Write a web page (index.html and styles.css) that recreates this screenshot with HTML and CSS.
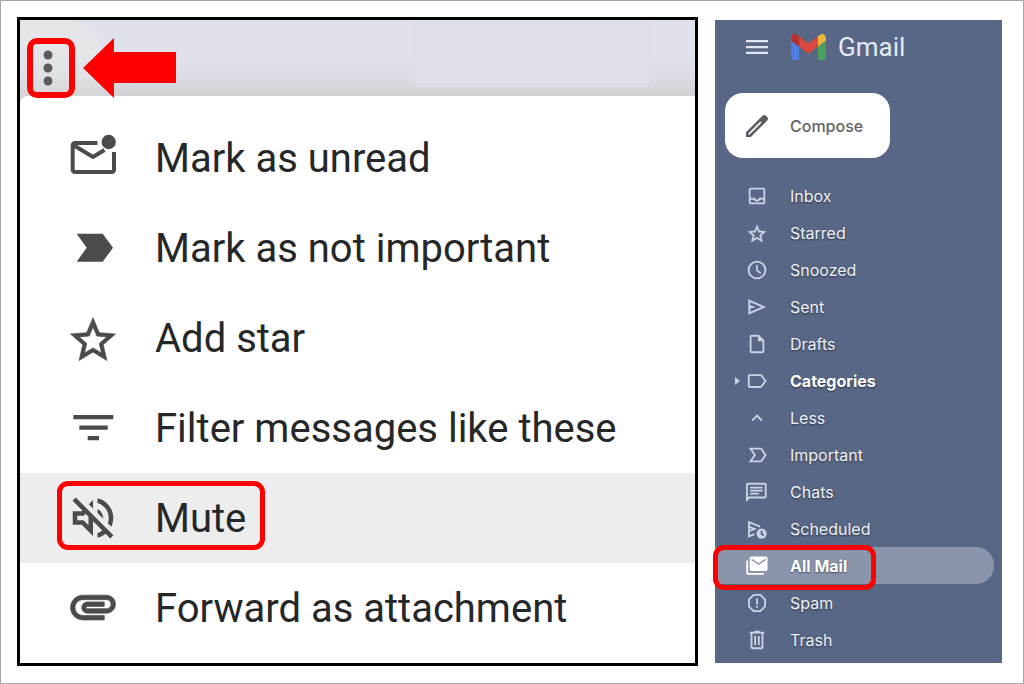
FILE: index.html
```html
<!DOCTYPE html>
<html lang="en">
<head>
    <meta charset="UTF-8">
    <meta name="viewport" content="width=device-width, initial-scale=1.0">
    <title>Mute messages in Gmail</title>
    <link rel="stylesheet" href="styles.css">
</head>
<body>
    <div class="page">

        <!-- More menu -->
        <section class="menu-panel">
            <div class="menu-header">
                <button class="more-button" aria-label="More">
                    <svg width="10" height="36" viewBox="0 0 10 36">
                        <circle cx="5" cy="5" r="4.5"/>
                        <circle cx="5" cy="18" r="4.5"/>
                        <circle cx="5" cy="31" r="4.5"/>
                    </svg>
                </button>
                <svg class="arrow" width="93" height="60" viewBox="0 0 93 60">
                    <path d="M0 30L31 0v14h62v31H31v15z"/>
                </svg>
                <div class="header-patch"></div>
            </div>
            <ul class="menu">
                <li>
                    <button class="menu-item">
                        <svg viewBox="0 0 54 54">
                            <path class="line" d="M31.5 12H9a2.3 2.3 0 0 0-2.3 2.3V38.7a2.3 2.3 0 0 0 2.3 2.3H45.7a2.3 2.3 0 0 0 2.3-2.3V21"/>
                            <path class="line" d="M8 14.500l19 11.500 11.500-7"/>
                            <circle cx="42.7" cy="11" r="7.2"/>
                        </svg>
                        Mark as unread
                    </button>
                </li>
                <li>
                    <button class="menu-item">
                        <svg viewBox="0 0 54 54"><path d="M10.7 12.7h26L47 26.7l-10.300 14h-26l10-14z"/></svg>
                        Mark as not important
                    </button>
                </li>
                <li>
                    <button class="menu-item">
                        <svg class="heavy" viewBox="0 -1 24 24"><path d="M22 9.240l-7.190-.62L12 2 9.190 8.630 2 9.240l5.460 4.730L5.820 21 12 17.270 18.180 21l-1.630-7.030L22 9.240zM12 15.400l-3.760 2.270 1-4.280-3.320-2.880 4.380-.38L12 6.100l1.710 4.040 4.380.38-3.320 2.880 1 4.280L12 15.400z"/></svg>
                        Add star
                    </button>
                </li>
                <li>
                    <button class="menu-item">
                        <svg viewBox="0 0 54 54"><path d="M7.3 14h40v4.3h-40zM13.3 24.5h28.4v4.3H13.3zM21.7 35H33v4.3H21.7z"/></svg>
                        Filter messages like these
                    </button>
                </li>
                <li>
                    <button class="menu-item selected">
                        <svg viewBox="0 0 24 24"><path d="M4.340 2.930L2.930 4.340 7.290 8.700 7 9H3v6h4l5 5v-6.590l4.180 4.180c-.65.49-1.380.88-2.180 1.110v2.060c1.340-.3 2.570-.92 3.610-1.750l2.050 2.050 1.410-1.410L4.340 2.930zM10 15.170L7.830 13H5v-2h2.830l.88-.88L10 11.410v3.760zM19 12c0 .82-.15 1.610-.41 2.340l1.530 1.530c.56-1.170.88-2.480.88-3.870 0-4.280-2.990-7.860-7-8.770v2.060c2.890.86 5 3.540 5 6.710zm-7-8l-1.880 1.880L12 7.760zm4.500 8c0-1.770-1.020-3.290-2.500-4.030v1.790l2.480 2.480c.01-.08.02-.16.02-.24z"/></svg>
                        Mute
                        <span class="callout"></span>
                    </button>
                </li>
                <li>
                    <button class="menu-item">
                        <svg class="heavy" viewBox="0 0.7 24 24"><path d="M2 12.500C2 9.460 4.460 7 7.500 7H18c2.210 0 4 1.790 4 4s-1.790 4-4 4H9.500C8.120 15 7 13.880 7 12.500S8.120 10 9.500 10H17v2H9.410c-.55 0-.55 1 0 1H18c1.100 0 2-.9 2-2s-.9-2-2-2H7.500C5.570 9 4 10.570 4 12.500S5.570 16 7.500 16H17v2H7.500C4.460 18 2 15.540 2 12.500z"/></svg>
                        Forward as attachment
                    </button>
                </li>
            </ul>
        </section>

        <!-- Gmail sidebar -->
        <aside class="sidebar">
            <div class="brand">
                <button class="burger" aria-label="Main menu">
                    <svg width="22" height="16" viewBox="0 0 22 16"><path d="M0 1h22v2.300H0zM0 6.900h22v2.300H0zM0 12.800h22v2.300H0z"/></svg>
                </button>
                <svg class="logo" width="35" height="26" viewBox="52 42 88 66">
                    <path fill="#4f7fe3" d="M58 108h14V74L52 59v43c0 3.320 2.690 6 6 6"/>
                    <path fill="#4b9f5f" d="M120 108h14c3.320 0 6-2.690 6-6V59l-20 15"/>
                    <path fill="#eab63c" d="M120 48v26l20-15v-8c0-7.420-8.470-11.650-14.400-7.200"/>
                    <path fill="#d9493f" d="M72 74V48l24 18 24-18v26L96 92"/>
                    <path fill="#b3302f" d="M52 51v8l20 15V48l-5.600-4.200c-5.940-4.450-14.400-.22-14.400 7.200"/>
                </svg>
                <span class="brand-name">Gmail</span>
            </div>

            <button class="compose">
                <svg viewBox="0 0 22 22">
                    <path fill-rule="evenodd" d="M0 17.200L14.400 2.800 19.200 7.600 4.800 22H0zM2.400 18.400v1.200h1.200L15.600 7.600l-1.200-1.200z"/>
                    <path d="M13.500 3.700L16.600.8a2.400 2.400 0 0 1 3.400 0l1.200 1.200a2.400 2.400 0 0 1 0 3.400L18.300 8.500z"/>
                </svg>
                Compose
            </button>

            <nav class="nav">
                <a class="nav-item" href="#">
                    <svg viewBox="0 0 24 24"><path d="M19 3H5c-1.100 0-2 .9-2 2v14c0 1.100.9 2 2 2h14c1.100 0 2-.9 2-2V5c0-1.100-.9-2-2-2zm0 16H5v-3h3.560c.69 1.190 1.970 2 3.450 2s2.750-.81 3.450-2H19v3zm0-5h-4.990c0 1.100-.9 2-2 2s-2-.9-2-2H5V5h14v9z"/></svg>
                    Inbox
                </a>
                <a class="nav-item" href="#">
                    <svg class="heavy" viewBox="0 -1 24 24"><path d="M22 9.240l-7.190-.62L12 2 9.190 8.630 2 9.240l5.460 4.730L5.820 21 12 17.270 18.180 21l-1.630-7.030L22 9.240zM12 15.400l-3.760 2.270 1-4.280-3.320-2.880 4.380-.38L12 6.100l1.710 4.040 4.380.38-3.320 2.880 1 4.280L12 15.400z"/></svg>
                    Starred
                </a>
                <a class="nav-item" href="#">
                    <svg viewBox="0 0 24 24"><path d="M12 1.800a10.200 10.200 0 1 0 0 20.400 10.200 10.200 0 0 0 0-20.400zm0 18.300a8.100 8.100 0 1 1 0-16.200 8.100 8.100 0 0 1 0 16.200zM12.800 6.500H11v6l4.500 4 1.200-1.400-3.900-3.400z"/></svg>
                    Snoozed
                </a>
                <a class="nav-item" href="#">
                    <svg viewBox="0 0 24 24"><path fill-rule="evenodd" d="M2.500 3.500L22 12 2.500 20.500zM4.600 6.700v3.400l6 1.900-6 1.900v3.400L17 12z"/></svg>
                    Sent
                </a>
                <a class="nav-item" href="#">
                    <svg viewBox="0 0 24 24"><path fill-rule="evenodd" d="M14 2H6c-1.100 0-2 .9-2 2v16c0 1.100.9 2 2 2h12c1.100 0 2-.9 2-2V8zM6 20V4h7v5h5v11z"/></svg>
                    Drafts
                </a>
                <a class="nav-item parent bold" href="#">
                    <svg class="caret" viewBox="0 0 5 8"><path d="M0 0l5 4-5 4z"/></svg>
                    <svg viewBox="0 0 24 24"><path fill-rule="evenodd" d="M16 4.500H4c-1.100 0-2 .9-2 2v11c0 1.100.9 2 2 2h12c.67 0 1.270-.33 1.630-.84L22.500 12l-4.870-6.660A2 2 0 0 0 16 4.500zm0 13H4v-11h12l4 5.500z"/></svg>
                    Categories
                </a>
                <a class="nav-item" href="#">
                    <svg viewBox="0 0 24 24"><path d="M12 8l-6 6 1.410 1.410L12 10.830l4.590 4.580L18 14z"/></svg>
                    Less
                </a>
                <a class="nav-item" href="#">
                    <svg viewBox="0 0 24 24"><path fill-rule="evenodd" d="M3 4h13c.7 0 1.300.3 1.700.9L22.500 12l-4.800 7.100c-.4.6-1 .9-1.700.9H3l5.500-8zm3.800 2l4.200 6-4.200 6h9.200l4-6-4-6z"/></svg>
                    Important
                </a>
                <a class="nav-item" href="#">
                    <svg viewBox="0 0 24 24"><path fill-rule="evenodd" d="M2 2h18.500c1.100 0 2 .9 2 2v13c0 1.100-.9 2-2 2H4l-4 4V4c0-1.100.9-2 2-2zm0 2v14l1.200-1h17.300V4zM4.500 6.200H18v1.900H4.500zM4.500 9.500H18v1.900H4.500zM4.500 12.800H14v1.900H4.500z"/></svg>
                    Chats
                </a>
                <a class="nav-item" href="#">
                    <svg viewBox="0 0 24 24">
                        <path class="thin" d="M15.500 9.500L3.200 4.500v15.500l6-2.500M3.200 9.500l6 2.500-6 2.200"/>
                        <circle cx="17" cy="17" r="5.600"/>
                        <path class="hand" d="M17 13.800v3.400l2.200 1.800"/>
                    </svg>
                    Scheduled
                </a>
                <a class="nav-item bold current" href="#">
                    <svg viewBox="0 0 24 24">
                        <path fill-rule="evenodd" d="M6 1.500h15.500c1.100 0 2 .9 2 2v12c0 1.100-.9 2-2 2H6c-1.100 0-2-.9-2-2v-12c0-1.100.9-2 2-2zm0 2.200v1.900l7.800 5.200 7.700-5.200V3.700l-7.700 5.200z"/>
                        <path d="M.3 6h2v13.500h17.200v2H2.300c-1.100 0-2-.9-2-2z"/>
                    </svg>
                    All Mail
                    <span class="callout"></span>
                </a>
                <a class="nav-item" href="#">
                    <svg viewBox="0 0 24 24">
                        <path class="thin" d="M8.300 3.200h7.400l5.100 5.100v7.400l-5.100 5.100H8.300l-5.100-5.100V8.300z"/>
                        <path d="M11 6.800h2v6.700h-2zM11 15.300h2v2h-2z"/>
                    </svg>
                    Spam
                </a>
                <a class="nav-item" href="#">
                    <svg viewBox="0 0 24 24"><path fill-rule="evenodd" d="M15 3V2H9v1H4v2h1v15c0 1.100.9 2 2 2h10c1.100 0 2-.9 2-2V5h1V3zm2 17H7V5h10zM9 7.500h2v10H9zM13 7.500h2v10h-2z"/></svg>
                    Trash
                </a>
            </nav>
        </aside>

    </div>
</body>
</html>
```
FILE: styles.css
```css
* {
    box-sizing: border-box;
}
body {
    margin: 0;
    font-family: Roboto, "Liberation Sans", sans-serif;
    background-color: #fff;
}
button {
    font-family: inherit;
    border: none;
    background: none;
    padding: 0;
    cursor: pointer;
}
.page {
    display: flex;
    gap: 17px;
    min-height: 100vh;
    padding: 16px 21px 17px 16px;
    border: 1px solid #a6a6a6;
}

/* Red highlight boxes */
.callout {
    position: absolute;
    border: 5px solid #fe0000;
    border-radius: 11px;
    pointer-events: none;
}

/* More menu */
.menu-panel {
    flex: 675 1 0;
    border: 3px solid #000;
    background-color: #d5d5da;
}
.menu-header {
    position: relative;
    z-index: 1;
    display: flex;
    align-items: flex-start;
    gap: 8px;
    height: 76px;
    padding: 18px 0 0 7px;
    background: linear-gradient(#dfe1eb 50%, #dbdce4 75%, #d2d2d5);
}
/* rounded corner of the toolbar behind the dots */
.menu-header::before {
    content: "";
    position: absolute;
    left: 0;
    top: 0;
    width: 82px;
    height: 76px;
    border-radius: 0 36px 0 0;
    background: linear-gradient(#e5e6ea 40%, #e0e1e5 75%, #d5d5d8);
}
.header-patch {
    position: absolute;
    left: 58.4%;
    top: 0;
    width: 35%;
    height: 67px;
    border-radius: 0 0 6px 6px;
    background-color: #dde0e9;
}
.more-button {
    position: relative;
    display: flex;
    align-items: center;
    justify-content: center;
    width: 48px;
    height: 60px;
    padding-right: 6px;
    border: 6px solid #fe0000;
    border-radius: 10px;
    fill: #5a5b5e;
}
.arrow {
    position: relative;
    fill: #fe0000;
}
.menu {
    list-style: none;
    margin: 0;
    padding: 17px 0 10px;
    background-color: #fff;
    border-radius: 8px 0 0 0;
}
.menu-item {
    position: relative;
    display: flex;
    align-items: center;
    gap: 35px;
    width: 100%;
    height: 90px;
    padding-left: 46px;
    font-size: 40px;
    color: #262729;
    text-align: left;
    white-space: nowrap;
}
.menu-item svg {
    width: 54px;
    height: 54px;
    fill: #4a4b4b;
}
.menu-item .line {
    fill: none;
    stroke: #4a4b4b;
    stroke-width: 4px;
}
.menu-item .heavy {
    stroke: #4a4b4b;
    stroke-width: 0.3px;
}
.menu-item.selected {
    background-color: #ededed;
}
.menu-item .callout {
    left: 37px;
    top: 8px;
    width: 208px;
    height: 69px;
}

/* Sidebar */
.sidebar {
    flex: 287 1 0;
    margin: 3px 0;
    background-color: #586785;
    color: #eef1f7;
}
.brand {
    display: flex;
    align-items: center;
    height: 54px;
    padding-left: 31px;
}
.burger {
    display: flex;
    margin-right: 23px;
    fill: #dfe5f3;
}
.brand-name {
    margin-left: 12px;
    font-size: 26px;
    color: #e4e9f5;
}
.compose {
    display: flex;
    align-items: center;
    gap: 22px;
    width: 165px;
    height: 65px;
    margin: 19px 0 19px 10px;
    padding-left: 21px;
    border-radius: 18px;
    background-color: #fff;
    font-family: Inter, Roboto, sans-serif;
    font-size: 16px;
    font-weight: 500;
    color: #606367;
}
.compose svg {
    width: 22px;
    height: 22px;
    fill: #5a5d61;
}
.nav {
    padding-bottom: 5px;
}
.nav-item {
    position: relative;
    display: flex;
    align-items: center;
    gap: 22px;
    height: 37px;
    margin-right: 8px;
    padding-left: 31px;
    border-radius: 0 18px 18px 0;
    font-family: Inter, Roboto, sans-serif;
    font-size: 16px;
    color: inherit;
    text-decoration: none;
    text-shadow: 0 1px 2px rgba(0, 0, 0, 0.5);
}
.nav-item svg {
    width: 22px;
    height: 22px;
    fill: #c9d2e6;
}
.nav-item .heavy {
    stroke: #c9d2e6;
    stroke-width: 0.4px;
}
.nav-item .thin {
    fill: none;
    stroke: #c9d2e6;
    stroke-width: 2px;
}
.nav-item .hand {
    fill: none;
    stroke: #586785;
    stroke-width: 2px;
}
.nav-item.parent {
    padding-left: 20px;
}
.nav-item .caret {
    width: 5px;
    height: 8px;
    margin-right: -16px;
}
.nav-item.bold {
    font-weight: 700;
    color: #fff;
}
.nav-item.current {
    background-color: #8a95ac;
}
.nav-item.current svg {
    fill: #fff;
}
.nav-item .callout {
    left: -2px;
    top: -2px;
    width: 163px;
    height: 45px;
}
```
